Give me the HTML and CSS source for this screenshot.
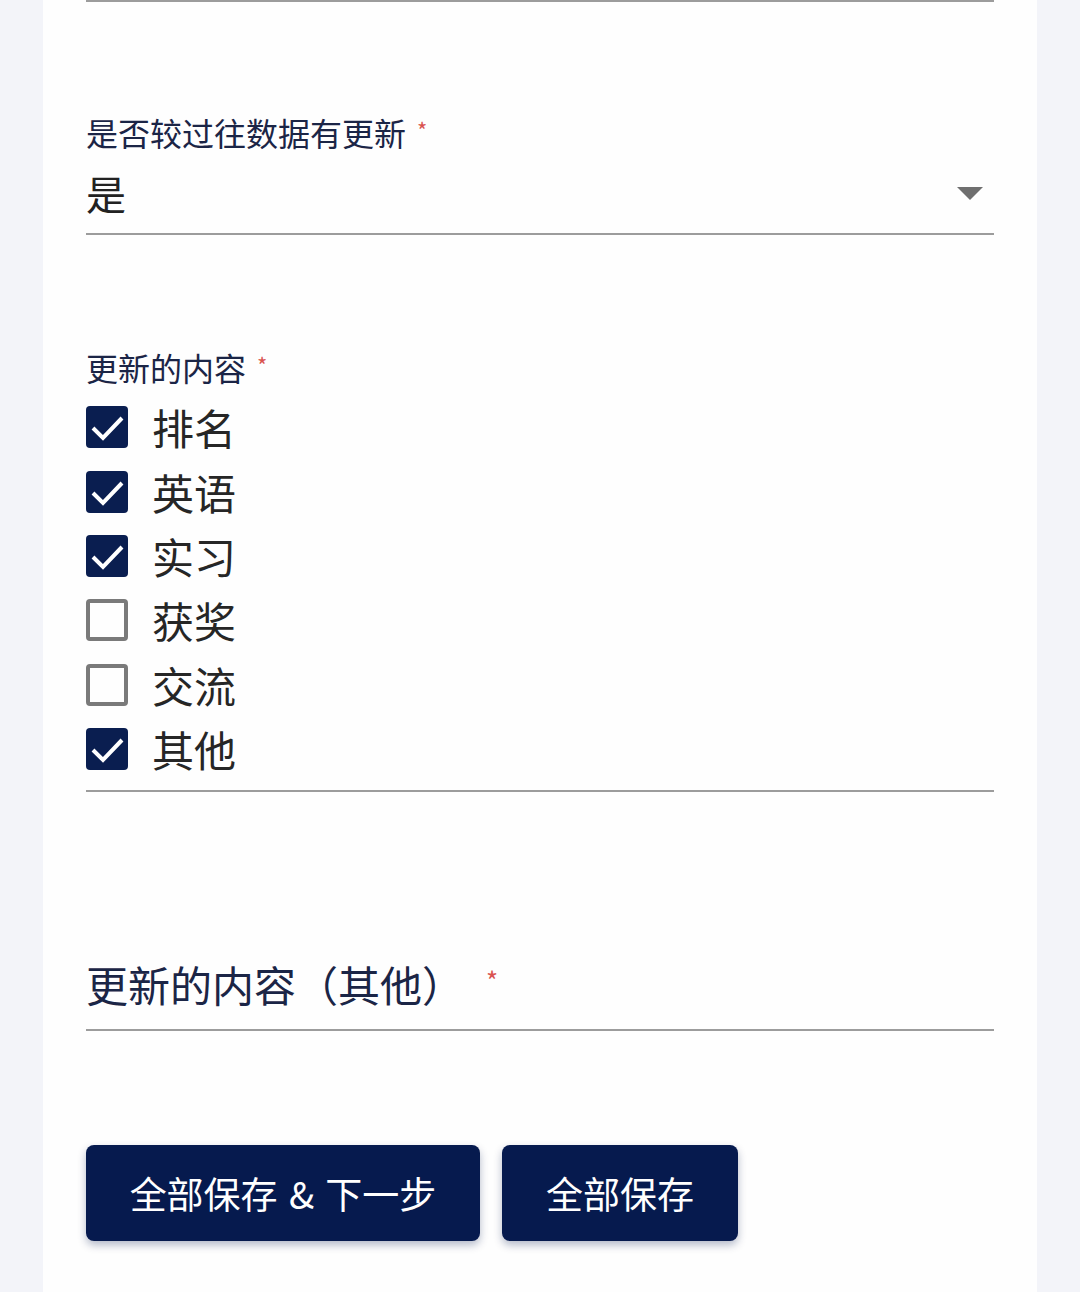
FILE: index.html
```html
<!DOCTYPE html>
<html lang="zh-CN">
<head>
<meta charset="utf-8">
<title>表单</title>
<link rel="stylesheet" href="styles.css">
</head>
<body>
<div class="card">
  <div class="top-rule"></div>

  <div class="field select-field">
    <div class="label">是否较过往数据有更新<span class="req">*</span></div>
    <div class="select">
      <span class="value">是</span>
      <svg class="arrow" width="26" height="13" viewBox="0 0 26 13"><path d="M0 0 H26 L13 13 Z" fill="#6f6f6f"/></svg>
    </div>
  </div>

  <div class="field check-field">
    <div class="label">更新的内容<span class="req">*</span></div>
    <div class="checks">
      <div class="check-row"><span class="box on"><svg viewBox="0 0 42 42"><path d="M7 22 L17 32 L36 12" fill="none" stroke="#fff" stroke-width="4"/></svg></span><span class="opt">排名</span></div>
      <div class="check-row"><span class="box on"><svg viewBox="0 0 42 42"><path d="M7 22 L17 32 L36 12" fill="none" stroke="#fff" stroke-width="4"/></svg></span><span class="opt">英语</span></div>
      <div class="check-row"><span class="box on"><svg viewBox="0 0 42 42"><path d="M7 22 L17 32 L36 12" fill="none" stroke="#fff" stroke-width="4"/></svg></span><span class="opt">实习</span></div>
      <div class="check-row"><span class="box off"></span><span class="opt">获奖</span></div>
      <div class="check-row"><span class="box off"></span><span class="opt">交流</span></div>
      <div class="check-row"><span class="box on"><svg viewBox="0 0 42 42"><path d="M7 22 L17 32 L36 12" fill="none" stroke="#fff" stroke-width="4"/></svg></span><span class="opt">其他</span></div>
    </div>
  </div>

  <div class="field text-field">
    <div class="placeholder">更新的内容（其他）<span class="req big">*</span></div>
  </div>

  <div class="actions">
    <button class="btn wide">全部保存 &amp; 下一步</button>
    <button class="btn">全部保存</button>
  </div>
</div>
</body>
</html>
```
FILE: styles.css
```css
html, body {
  margin: 0;
  padding: 0;
  background: #f3f4f9;
}
body {
  font-family: "Noto Sans CJK SC", "Noto Sans", sans-serif;
  width: 1080px;
  height: 1292px;
  overflow: hidden;
}
.card {
  margin: 0 43px;
  background: #fefefe;
  padding: 0 43px;
  height: 1292px;
  box-sizing: border-box;
}
.top-rule {
  border-top: 2px solid #9c9c9c;
  height: 0;
}
.label {
  font-size: 32px;
  line-height: 40px;
  color: #1b2546;
}
.req {
  color: #d9534f;
  font-size: 22px;
  vertical-align: top;
  line-height: 22px;
  margin-left: 11px;
  position: relative;
  top: 6px;
}
.req.big {
  font-size: 26px;
  margin-left: 22px;
  top: 13px;
}
.select-field {
  margin-top: 110px;
}
.select {
  margin-top: 17px;
  display: flex;
  align-items: center;
  justify-content: space-between;
  padding-bottom: 16px;
  border-bottom: 2px solid #9c9c9c;
}
.value {
  font-size: 40px;
  line-height: 48px;
  color: #222;
}
.arrow {
  margin-right: 11px;
  display: block;
}
.check-field {
  margin-top: 112px;
}
.checks {
  margin-top: 8px;
  padding-bottom: 9px;
  border-bottom: 2px solid #9c9c9c;
}
.check-row {
  height: 64.4px;
  display: flex;
  align-items: center;
}
.box {
  width: 42px;
  height: 42px;
  box-sizing: border-box;
  border-radius: 4px;
  display: block;
  flex: none;
}
.box svg {
  width: 42px;
  height: 42px;
  display: block;
}
.box.on {
  background: #0a1e50;
}
.box.off {
  border: 4px solid #7a7a7a;
}
.opt {
  margin-left: 24px;
  font-size: 42px;
  line-height: 56px;
  color: #262626;
}
.text-field {
  margin-top: 164px;
  padding-bottom: 17px;
  border-bottom: 2px solid #9c9c9c;
}
.placeholder {
  font-size: 42px;
  line-height: 56px;
  color: #1b2546;
}
.actions {
  margin-top: 114px;
  display: flex;
  gap: 22px;
}
.btn {
  height: 96px;
  width: 236px;
  border: none;
  border-radius: 8px;
  background: #061a4e;
  color: #fff;
  font-family: "Noto Sans CJK SC", "Noto Sans", sans-serif;
  font-size: 37px;
  padding: 0;
  box-shadow: 0 4px 8px rgba(6, 26, 78, 0.3);
}
.btn.wide {
  width: 394px;
  word-spacing: 3px;
}
```
